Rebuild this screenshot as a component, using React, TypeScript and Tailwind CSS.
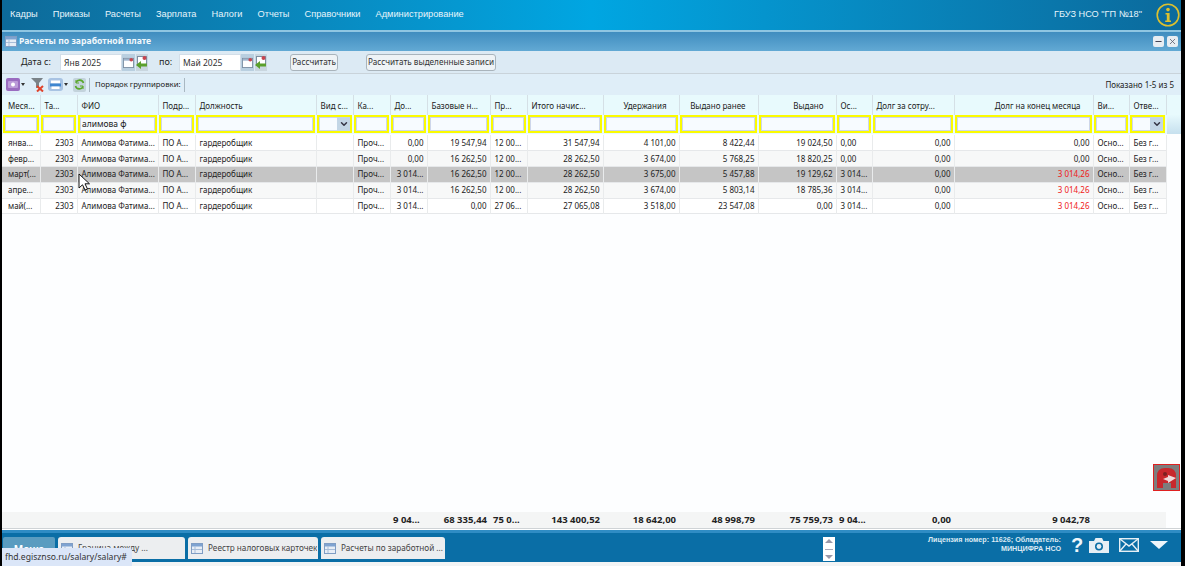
import { ChevronDown, X, Minus } from "lucide-react";

const font = "font-['Noto_Sans','DejaVu_Sans',sans-serif]";
const arial = "font-['Liberation_Sans',sans-serif]";

const menu = ["Кадры", "Приказы", "Расчеты", "Зарплата", "Налоги", "Отчеты", "Справочники", "Администрирование"];

const columns = [
  { title: "Меся...", w: "w-[38px]", align: "text-left" },
  { title: "Та...", w: "w-[37px]", align: "text-right" },
  { title: "ФИО", w: "w-[81px]", align: "text-left" },
  { title: "Подр...", w: "w-[37px]", align: "text-left" },
  { title: "Должность", w: "w-[121px]", align: "text-left" },
  { title: "Вид с...", w: "w-[37px]", align: "text-left", select: true },
  { title: "Ка...", w: "w-[37px]", align: "text-left" },
  { title: "До...", w: "w-[37px]", align: "text-right" },
  { title: "Базовые н...", w: "w-[63px]", align: "text-right" },
  { title: "Пр...", w: "w-[37px]", align: "text-left" },
  { title: "Итого начис...", w: "w-[76px]", align: "text-right" },
  { title: "Удержания", w: "w-[76px]", align: "text-right", head: "pr-[12px] text-right" },
  { title: "Выдано ранее", w: "w-[79px]", align: "text-right", head: "pr-[12px] text-right" },
  { title: "Выдано", w: "w-[78px]", align: "text-right", head: "pr-[12px] text-right" },
  { title: "Ос...", w: "w-[36px]", align: "text-left" },
  { title: "Долг за сотру...", w: "w-[82px]", align: "text-right" },
  { title: "Долг на конец месяца", w: "w-[139px]", align: "text-right", head: "pr-[12px] text-right" },
  { title: "Ви...", w: "w-[36px]", align: "text-left" },
  { title: "Отве...", w: "w-[37px]", align: "text-left", select: true },
];

const rows = [
  ["янва...", "2303", "Алимова Фатима...", "ПО А...", "гардеробщик", "", "Проч...", "0,00", "19 547,94", "12 00...", "31 547,94", "4 101,00", "8 422,44", "19 024,50", "0,00", "0,00", "0,00", "Осно...", "Без г..."],
  ["февр...", "2303", "Алимова Фатима...", "ПО А...", "гардеробщик", "", "Проч...", "0,00", "16 262,50", "12 00...", "28 262,50", "3 674,00", "5 768,25", "18 820,25", "0,00", "0,00", "0,00", "Осно...", "Без г..."],
  ["март(...", "2303", "Алимова Фатима...", "ПО А...", "гардеробщик", "", "Проч...", "3 014...", "16 262,50", "12 00...", "28 262,50", "3 675,00", "5 457,88", "19 129,62", "3 014...", "0,00", "3 014,26", "Осно...", "Без г..."],
  ["апре...", "2303", "Алимова Фатима...", "ПО А...", "гардеробщик", "", "Проч...", "3 014...", "16 262,50", "12 00...", "28 262,50", "3 674,00", "5 803,14", "18 785,36", "3 014...", "0,00", "3 014,26", "Осно...", "Без г..."],
  ["май(...", "2303", "Алимова Фатима...", "ПО А...", "гардеробщик", "", "Проч...", "3 014...", "0,00", "27 06...", "27 065,08", "3 518,00", "23 547,08", "0,00", "3 014...", "0,00", "3 014,26", "Осно...", "Без г..."],
];

const totals = ["", "", "", "", "", "", "", "9 04...", "68 335,44", "75 0...", "143 400,52", "18 642,00", "48 998,79", "75 759,73", "9 04...", "0,00", "9 042,78", "", ""];

function CalendarIcon() {
  return (
    <svg width="11" height="11" viewBox="0 0 12 12">
      <rect x="0.5" y="1.5" width="11" height="10" fill="#fff" stroke="#7d8fa3" />
      <rect x="1" y="2" width="10" height="2" fill="#9db4cc" />
      <circle cx="9" cy="3" r="2" fill="#c8454f" />
    </svg>
  );
}

function BackIcon() {
  return (
    <svg width="12" height="14" viewBox="0 0 12 14">
      <rect x="1.5" y="1.5" width="9" height="9" fill="#fff" stroke="#7d8fa3" />
      <circle cx="8.5" cy="3" r="2" fill="#c8454f" />
      <path d="M0 10 L5 6 V8.5 H11 V11.5 H5 V14 Z" fill="#5aa02c" />
    </svg>
  );
}

function DatePick({ value }: { value: string }) {
  return (
    <div className="flex items-center">
      <input readOnly value={value} className="h-[17px] w-[62px] border border-[#d3dee8] bg-white pl-[3px] text-[8.5px] text-[#333] outline-none" />
      <span className="flex h-[17px] w-[13px] items-center justify-center bg-[#b9cfe0]"><CalendarIcon /></span>
      <span className="ml-px flex h-[17px] w-[12px] items-center justify-center bg-[#c9d6df]"><BackIcon /></span>
    </div>
  );
}

function ToolButton({ children, w }: { children: string; w: string }) {
  return (
    <button className={`h-[17px] rounded-[3px] border border-[#a9b4bc] bg-[#eef3f6] text-[8.2px] leading-none whitespace-nowrap text-[#333] ${w}`}>
      {children}
    </button>
  );
}

function TableIcon() {
  return (
    <svg width="12" height="11" viewBox="0 0 12 11">
      <rect x="0.5" y="0.5" width="11" height="10" fill="#e8eef6" stroke="#7f9dc4" />
      <rect x="1" y="1" width="10" height="2.5" fill="#7fa3d1" />
      <path d="M1 6.5 H11 M4 3.5 V10" stroke="#a8bdd8" />
    </svg>
  );
}

function TaskTab({ label, w }: { label: string; w: string }) {
  return (
    <div className={`flex h-[22px] items-center gap-[5px] rounded-t-[3px] bg-[#eceef0] pl-[3px] ${w}`}>
      <TableIcon />
      <span className="truncate text-[8.2px] text-[#444]">{label}</span>
    </div>
  );
}

export default function App() {
  return (
    <div className={`relative flex h-[566px] w-[1185px] flex-col overflow-hidden border-r-[4px] border-l-[2px] border-black bg-[#fdfeff] text-[8px] text-[#222] ${font}`}>
      <header className="flex h-[30px] shrink-0 items-center bg-gradient-to-r from-[#0d6a99] via-[#00a6e2] to-[#0b6a9c] pl-[8px] pr-[1px] text-white">
        <nav className={`flex gap-[15px] text-[9.25px] ${arial}`}>
          {menu.map((m) => (
            <a key={m} href="#" className="text-[#e6f4fb]">{m}</a>
          ))}
        </nav>
        <span className={`ml-auto mr-[14px] text-[9.2px] text-[#e6f4fb] ${arial}`}>ГБУЗ НСО "ГП №18"</span>
        <svg width="24" height="24" viewBox="0 0 24 24">
          <circle cx="12" cy="12" r="10.8" fill="none" stroke="#dcc02e" strokeWidth="1.6" />
          <circle cx="12" cy="6.6" r="1.8" fill="#dcc02e" />
          <path d="M9.5 10 H13.6 V17.5 H15 V19 H9.2 V17.5 H10.8 V11.5 H9.5 Z" fill="#dcc02e" />
        </svg>
      </header>
      <div className="h-[2px] shrink-0 bg-[#8fc6e2]" />

      <div className="flex h-[19px] shrink-0 items-center bg-gradient-to-b from-[#3f8dbf] to-[#62a9d4] pl-[3px] pr-[3px]">
        <TableIcon />
        <span className="ml-[2px] text-[8.65px] font-bold text-[#f2f8fc]">Расчеты по заработной плате</span>
        <span className="ml-auto flex h-[11px] w-[11px] items-center justify-center rounded-[2px] bg-[#e7edf2] text-[#445]"><Minus size={9} strokeWidth={3} /></span>
        <span className="ml-[3px] flex h-[11px] w-[11px] items-center justify-center rounded-[2px] bg-[#e7edf2] text-[#556]"><X size={9} strokeWidth={2} /></span>
      </div>

      <div className="flex h-[23px] shrink-0 items-center border-b border-[#c9d3da] bg-[#dceaf4] pl-[19px] text-[9px]">
        <span className="w-[39px]">Дата с:</span>
        <DatePick value="Янв 2025" />
        <span className="ml-[11px] w-[20px]">по:</span>
        <DatePick value="Май 2025" />
        <div className="ml-[23px]"><ToolButton w="w-[48px]">Рассчитать</ToolButton></div>
        <div className="ml-[28px]"><ToolButton w="w-[130px]">Рассчитать выделенные записи</ToolButton></div>
      </div>

      <div className="flex h-[21px] shrink-0 items-center bg-[#dfeef8] pl-[4px] pr-[7px]">
        <svg width="14" height="13" viewBox="0 0 14 13">
          <rect width="14" height="13" rx="2" fill="#9a6cc0" />
          <rect x="2" y="3" width="10" height="7" rx="1" fill="#bb9ad8" />
          <circle cx="7" cy="6.5" r="2" fill="#fff" />
        </svg>
        <span className="ml-[1px] h-0 w-0 border-x-[2px] border-t-[3px] border-x-transparent border-t-[#333]" />
        <svg className="ml-[6px]" width="13" height="15" viewBox="0 0 13 15">
          <path d="M0 1 H12 L8 6 V11 H5 V6 Z" fill="#7a8288" />
          <path d="M6 9 L12 14.5 M12 9 L6 14.5" stroke="#e0432b" strokeWidth="2" />
        </svg>
        <svg className="ml-[4px]" width="15" height="13" viewBox="0 0 15 13">
          <rect width="15" height="13" rx="3" fill="#a8c3e3" />
          <rect x="3" y="2.5" width="9" height="3" fill="#fff" />
          <rect x="2" y="5.5" width="11" height="3" fill="#3f86d0" />
          <rect x="3.5" y="8.5" width="8" height="2.5" fill="#fff" />
        </svg>
        <span className="ml-[1px] h-0 w-0 border-x-[2px] border-t-[3px] border-x-transparent border-t-[#333]" />
        <span className="ml-[5px] flex h-[14px] w-[13px] items-center justify-center rounded-[2px] bg-[#c3d3dc]">
          <svg width="11" height="11" viewBox="0 0 11 11" fill="none" stroke="#5aa82c" strokeWidth="1.6">
            <path d="M9.5 4 A4 4 0 0 0 2 3.5 M1.5 7 A4 4 0 0 0 9 7.5" />
            <path d="M2 1 V4 H5 M9 10 V7 H6" strokeWidth="1" />
          </svg>
        </span>
        <span className="ml-[3px] h-[14px] w-px bg-[#a9b8c2]" />
        <span className="ml-[5px] text-[7.75px]">Порядок группировки:</span>
        <span className="ml-[3px] h-[14px] w-px bg-[#a9b8c2]" />
        <span className="ml-auto">Показано 1-5 из 5</span>
      </div>

      <div className="flex min-h-0 flex-1 flex-col">
        <div className="bg-gradient-to-b from-[#e8fafd] from-[50%] to-[#c6e0ee]">
          <table className="w-[1164px] table-fixed border-collapse bg-[#e8fafd]">
            <colgroup>
              {columns.map((c) => (
                <col key={c.title} className={c.w} />
              ))}
            </colgroup>
            <thead>
              <tr className="h-[20px]">
                {columns.map((c, i) => (
                  <th key={c.title} className={`truncate border-r border-[#d5e0e6] pt-[1px] font-normal ${i === 0 ? "pl-[6px]" : "pl-[4px]"} ${c.head ?? "pr-[2px] text-left"}`}>
                    {c.title}
                  </th>
                ))}
              </tr>
              <tr className="h-[19px]">
                {columns.map((c, i) => (
                  <td key={c.title} className="px-[1px] py-0 align-top">
                    <div className="flex h-[18px] items-center border-2 border-[#fbfb00] bg-[#f7fbff] shadow-[inset_0_0_0_1px_#cdd6ea]">
                      {i === 2 && <span className="pl-[2px] text-[8.5px]">алимова ф</span>}
                      {c.select && (
                        <span className="ml-auto flex h-full w-[13px] items-center justify-center bg-[#c3d6e6] text-[#334]">
                          <ChevronDown size={10} strokeWidth={3.5} />
                        </span>
                      )}
                    </div>
                  </td>
                ))}
              </tr>
            </thead>
          </table>
        </div>

        <table className="mt-px w-[1164px] table-fixed border-collapse">
          <colgroup>
            {columns.map((c) => (
              <col key={c.title} className={c.w} />
            ))}
          </colgroup>
          <tbody>
            {rows.map((row, r) => (
              <tr key={r} className={`h-[15.75px] border-b border-[#e6e8ea] ${r === 2 ? "bg-[#c5c5c5]" : r % 2 ? "bg-[#f7f8f8]" : "bg-white"}`}>
                {row.map((cell, i) => (
                  <td key={i} className={`overflow-hidden border-r border-[#e9ebec] py-0 pr-[3px] leading-[12px] whitespace-nowrap ${i === 0 ? "pl-[6px]" : "pl-[4px]"} ${columns[i].align} ${i === 16 && cell !== "0,00" ? "text-[#f01818]" : "text-[#222]"}`}>
                    {cell}
                  </td>
                ))}
              </tr>
            ))}
          </tbody>
        </table>

        <div className="flex-1" />

        <table className="w-[1164px] table-fixed border-collapse bg-[#f4f5f5]">
          <colgroup>
            {columns.map((c) => (
              <col key={c.title} className={c.w} />
            ))}
          </colgroup>
          <tbody>
            <tr className="h-[16px]">
              {totals.map((cell, i) => (
                <td key={i} className={`overflow-hidden py-0 pr-[3px] pl-[3px] text-[9.5px] font-bold whitespace-nowrap text-[#222] ${i === 7 || i === 9 || i === 14 ? "text-left" : "text-right"}`}>
                  {cell}
                </td>
              ))}
            </tr>
          </tbody>
        </table>
        <div className="h-[2px] border-t border-[#cfd3d6] bg-white" />
      </div>

      <footer className="flex h-[32px] shrink-0 items-end border-t-[3px] border-[#2f8cc4] bg-[#0a6ea6] pb-[1px] pl-[1px] pr-[13px] text-white">
        <div className="flex gap-[3px]">
          <div className="flex h-[24px] w-[52px] items-start justify-center rounded-t-[2px] bg-[#5a9cc0] pt-[5px] text-[10px] font-bold text-white">Меню</div>
          <TaskTab label="Граница между ..." w="w-[127px]" />
          <TaskTab label="Реестр налоговых карточек" w="w-[130px]" />
          <TaskTab label="Расчеты по заработной ..." w="w-[124px]" />
        </div>
        <div className="ml-[378px] flex h-[24px] w-[12px] flex-col items-center justify-between bg-white py-[2px]">
          <span className="h-0 w-0 border-x-[4px] border-b-[4px] border-x-transparent border-b-[#99a]" />
          <span className="h-px w-[8px] bg-[#aab]" />
          <span className="h-0 w-0 border-x-[4px] border-t-[4px] border-x-transparent border-t-[#99a]" />
        </div>
        <div className={`ml-auto w-[170px] self-start pt-[2px] text-right text-[7.2px] leading-[9px] font-bold text-[#dbeaf4] ${arial}`}>
          Лицензия номер: 11626; Обладатель:<br />МИНЦИФРА НСО
        </div>
        <div className="mb-[6px] ml-[9px] flex items-center">
          <span className={`w-[14px] text-center text-[20px] leading-none font-bold text-[#eef6fb] ${arial}`}>?</span>
          <svg className="ml-[5px]" width="20" height="15" viewBox="0 0 20 15">
            <path d="M0 3 H5 L6.5 0 H13 L14.5 3 H20 V15 H0 Z" fill="#e6eff5" />
            <circle cx="10" cy="8.5" r="4" fill="#0a6ea6" />
            <circle cx="10" cy="8.5" r="2.4" fill="#e6eff5" />
          </svg>
          <svg className="ml-[10px]" width="20" height="14" viewBox="0 0 20 14" fill="none" stroke="#e6eff5" strokeWidth="1.4">
            <rect x="0.7" y="0.7" width="18.6" height="12.6" />
            <path d="M0.7 0.7 L10 8 L19.3 0.7 M0.7 13.3 L7 6 M19.3 13.3 L13 6" />
          </svg>
          <svg className="ml-[11px]" width="18" height="8" viewBox="0 0 18 8"><path d="M0 0 H18 L9 8 Z" fill="#eef6fb" /></svg>
        </div>
      </footer>
      <div className="h-[4px] shrink-0 bg-[#f2f4f5]" />

      {/* status bar tooltip from browser */}
      <div className="absolute bottom-0 left-0 flex h-[18px] w-[130px] items-center rounded-tr-[3px] bg-[#dbe6f8] pl-[3px] text-[8.6px] whitespace-nowrap text-[#333]">
        fhd.egisznso.ru/salary/salary#
      </div>

      {/* side launcher */}
      <div className="absolute left-[1151px] top-[464px] flex h-[27px] w-[27px] items-center justify-center border border-[#e02020] bg-[#7d7d7d]">
        <svg width="23" height="21" viewBox="0 0 23 21">
          <path d="M2 21 V9 Q2 1 10 1 H13 Q21 1 21 9 V21 H16 V16 H8 V21 Z" fill="#c8282c" />
          <circle cx="10" cy="7" r="2" fill="#7d2020" />
          <path d="M8 12 L13 10 V8 L21 11 L13 16 V14 Z" fill="#f0dcdc" />
        </svg>
      </div>

      {/* mouse pointer */}
      <svg className="absolute left-[76px] top-[173px]" width="13" height="18" viewBox="0 0 13 18">
        <path d="M1 1 V15 L4.5 11.8 L7 17 L9.5 16 L7 10.8 L11.5 10.8 Z" fill="#fff" stroke="#111" strokeWidth="1" />
      </svg>
    </div>
  );
}
